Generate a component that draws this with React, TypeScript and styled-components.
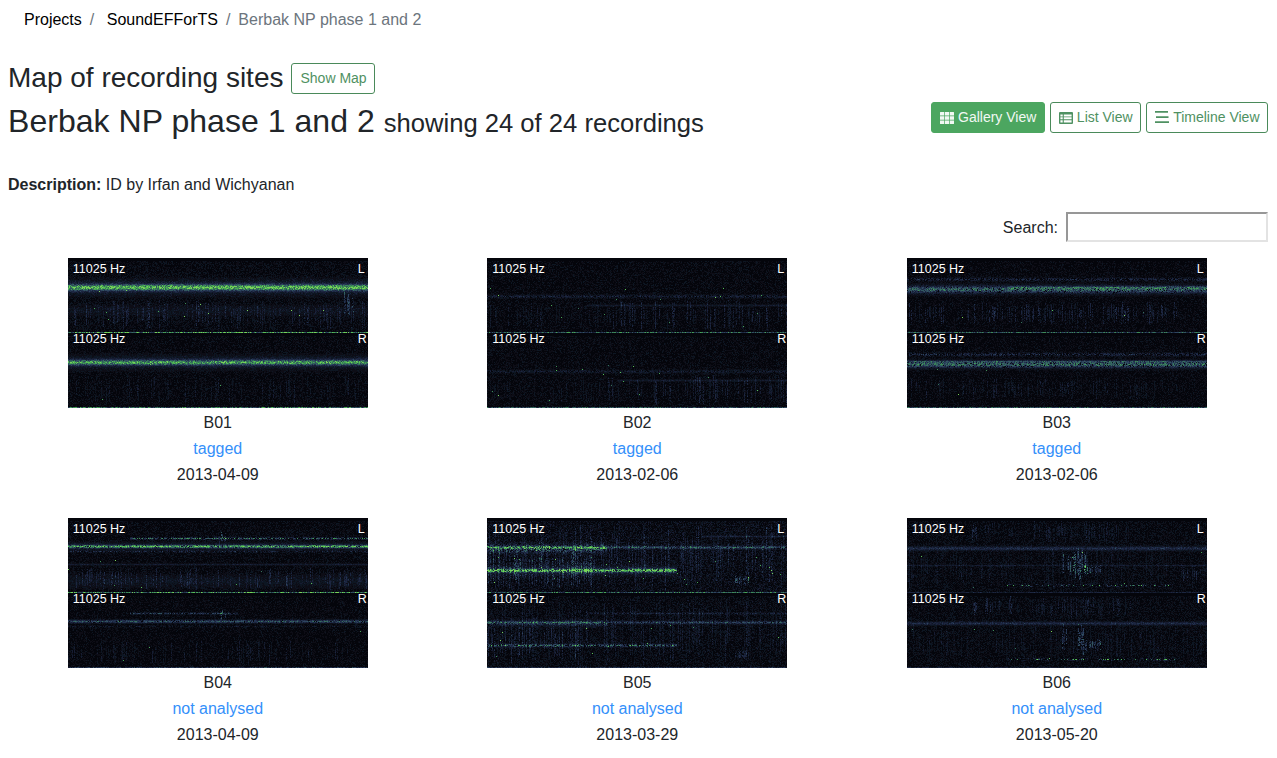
import React, { useMemo } from 'react';
import styled, { createGlobalStyle } from 'styled-components';

const GlobalStyle = createGlobalStyle`
  html, body {
    margin: 0;
    background: #fff;
  }
  body {
    padding: 8px 9px 0 8px;
    font-family: "Liberation Sans", Arial, sans-serif;
    font-size: 16px;
    line-height: 1.5;
    color: #212529;
  }
`;

const Breadcrumb = styled.ol`
  display: flex;
  list-style: none;
  margin: 0 0 31px;
  padding: 0 16px;
`;

const Crumb = styled.li<{ $active?: boolean; $first?: boolean; $gap?: number }>`
  color: ${({ $active }) => ($active ? '#6c757d' : '#000')};
  &::before {
    content: ${({ $first }) => ($first ? 'none' : "'/'")};
    color: #6c757d;
    padding: 0 8px;
  }
  a {
    color: inherit;
    text-decoration: none;
    margin-left: ${({ $gap }) => $gap ?? 0}px;
  }
`;

const MapRow = styled.div`
  display: flex;
  align-items: center;
  height: 31px;
  margin-bottom: 8px;
`;

const MapTitle = styled.h3`
  margin: 0 8px 2px 0;
  font-size: 28px;
  font-weight: 500;
  line-height: 1.2;
`;

const Button = styled.button<{ $active?: boolean }>`
  display: inline-flex;
  align-items: center;
  gap: 4px;
  height: 31px;
  padding: 0 7.5px 0 8px;
  font-family: inherit;
  font-size: 14px;
  line-height: 21px;
  white-space: nowrap;
  border: 1px solid ${({ $active }) => ($active ? '#4ca660' : '#4a8a5a')};
  border-radius: 3px;
  background: ${({ $active }) => ($active ? '#4ca660' : '#fff')};
  color: ${({ $active }) => ($active ? '#f1f8f3' : '#4f9162')};
`;

const HeaderRow = styled.div`
  display: flex;
  justify-content: space-between;
  align-items: flex-start;
  height: 71px;
`;

const Heading = styled.h2`
  margin: 0;
  font-size: 32px;
  font-weight: 500;
  line-height: 38px;
  letter-spacing: 0.04px;
  small {
    font-size: 25.6px;
    font-weight: 400;
    letter-spacing: 0;
  }
`;

const ViewButtons = styled.div`
  display: flex;
  gap: 5px;
`;

const Description = styled.p`
  margin: 0 0 15px;
  b {
    font-weight: 700;
  }
`;

const SearchRow = styled.label`
  display: flex;
  justify-content: flex-end;
  align-items: center;
  gap: 8px;
  margin-bottom: 16px;
`;

const SearchLabel = styled.span`
  margin-top: 2px;
`;

const SearchInput = styled.input`
  box-sizing: border-box;
  width: 202px;
  height: 30px;
  padding: 1px 2px;
  border: 2px solid #e3e3e3;
  border-top-color: #979797;
  border-left-color: #979797;
  background: #fff;
`;

const Gallery = styled.div`
  display: grid;
  grid-template-columns: repeat(3, 419.5px);
`;

const Card = styled.div`
  display: flex;
  flex-direction: column;
  align-items: center;
  height: 260px;
`;

const CardLine = styled.div<{ $link?: boolean }>`
  height: 26px;
  line-height: 26px;
  color: ${({ $link }) => ($link ? '#3490fa' : '#212529')};
`;

const CardTitle = styled(CardLine)`
  margin-top: 2px;
`;

const Thumb = styled.div`
  position: relative;
  width: 300px;
  height: 150px;
  overflow: hidden;
  background: #04050b;
  svg {
    display: block;
  }
`;

const ThumbLabel = styled.span<{ $row: number; $side?: boolean }>`
  position: absolute;
  top: ${({ $row }) => 3 + $row * 70}px;
  left: ${({ $side }) => ($side ? 290 : 5)}px;
  color: #fff;
  font-size: 12.5px;
  line-height: 16px;
`;

const GridIcon = () => (
  <svg width="14" height="14" viewBox="0 0 14 14">
    <path
      fill="currentColor"
      d="M0 1.5a.5.5 0 0 1 .5-.5h3.7v3.5H0zM4.9 1h4.2v3.5H4.9zM9.8 1h3.7a.5.5 0 0 1 .5.5v3H9.8zM0 5.25h4.2v3.5H0zM4.9 5.25h4.2v3.5H4.9zM9.8 5.25H14v3.5H9.8zM0 9.5h4.2V13H.5a.5.5 0 0 1-.5-.5zM4.9 9.5h4.2V13H4.9zM9.8 9.5H14v3a.5.5 0 0 1-.5.5H9.8z"
    />
  </svg>
);

const ListIcon = () => (
  <svg width="14" height="14" viewBox="0 0 14 14">
    <path
      fill="currentColor"
      fillRule="evenodd"
      d="M1 1h12a1 1 0 0 1 1 1v10a1 1 0 0 1-1 1H1a1 1 0 0 1-1-1V2a1 1 0 0 1 1-1zM1.4 3.4v2h2.3v-2zm3.4 0v2h7.8v-2zM1.4 6.3v2h2.3v-2zm3.4 0v2h7.8v-2zM1.4 9.2v2.2h2.3V9.2zm3.4 0v2.2h7.8V9.2z"
    />
  </svg>
);

const BarsIcon = () => (
  <svg width="14" height="14" viewBox="0 0 14 14">
    <path fill="currentColor" d="M0 0h13v1.7H0zM1 5.2h12.5v1.7H1zM0 10.2h14v1.7H0z" />
  </svg>
);

interface Band {
  y: number;
  h: number;
  amp: number;
  from?: number;
  to?: number;
  grain?: number;
}

interface Patch {
  x: number;
  w: number;
  y: number;
  h: number;
  amp: number;
  density: number;
}

interface Channel {
  base: number;
  line: number;
  bands: Band[];
  patches: Patch[];
  dots: number;
}

const BUCKETS = [
  '#080b15', '#0d1220', '#131b30', '#1a2640', '#233350', '#2d445e',
  '#32585e', '#36715b', '#3c8c56', '#46a754', '#58c054', '#7ad258'
];

function makeRandom(seed: number) {
  let s = seed >>> 0;
  return () => {
    s = (s + 0x6d2b79f5) >>> 0;
    let t = Math.imul(s ^ (s >>> 15), 1 | s);
    t = (t + Math.imul(t ^ (t >>> 7), 61 | t)) ^ t;
    return ((t ^ (t >>> 14)) >>> 0) / 4294967296;
  };
}

function renderChannel(ch: Channel, seed: number, top: number, out: string[]) {
  const rnd = makeRandom(seed);
  const field: Float32Array[] = [];
  for (let y = 0; y < 75; y++) field.push(new Float32Array(300));

  ch.patches.forEach(p => {
    for (let x = p.x; x < Math.min(300, p.x + p.w); x++) {
      if (rnd() > p.density) continue;
      const strength = p.amp * (0.4 + rnd() * 0.9);
      const y0 = p.y + Math.floor(rnd() * p.h * 0.4);
      const y1 = p.y + p.h - Math.floor(rnd() * p.h * 0.4);
      for (let y = y0; y < y1 && y < 75; y++) {
        if (rnd() < 0.7) field[y][x] += strength * (0.5 + rnd() * 0.6);
      }
    }
  });

  ch.bands.forEach(b => {
    const from = b.from ?? 0;
    const to = b.to ?? 300;
    const grain = b.grain ?? 0;
    for (let y = Math.max(0, Math.floor(b.y - b.h * 2)); y < Math.min(75, b.y + b.h * 2); y++) {
      const fall = Math.exp(-(((y - b.y) / b.h) ** 2));
      for (let x = from; x < to; x++) {
        if (grain && rnd() < grain) continue;
        field[y][x] += b.amp * fall * (0.5 + rnd() * 0.75);
      }
    }
  });

  for (let i = 0; i < ch.dots; i++) {
    const x = Math.floor(rnd() * 300);
    const y = 30 + Math.floor(rnd() * 40);
    field[y][x] += 0.6 + rnd() * 0.3;
  }

  for (let y = 0; y < 75; y++) {
    for (let x = 0; x < 300; x++) {
      const r = rnd();
      let v = field[y][x] + r * r * r * ch.base + rnd() * ch.base * 0.15;
      if (y < 3) v *= 0.1;
      if (y === 74) v = ch.line * (0.35 + rnd() * 0.9);
      if (v < 0.03) continue;
      const bucket = Math.min(BUCKETS.length - 1, Math.floor(v * BUCKETS.length));
      out[bucket] += `M${x} ${y + top}h1v1h-1z`;
    }
  }
}

const Spectrogram = ({ left, right, seed }: { left: Channel; right: Channel; seed: number }) => {
  const paths = useMemo(() => {
    const out = BUCKETS.map(() => '');
    renderChannel(left, seed, 0, out);
    renderChannel(right, seed + 97, 75, out);
    return out;
  }, [left, right, seed]);

  return (
    <Thumb>
      <svg width="300" height="150" viewBox="0 0 300 150">
        <filter id={`soft${seed}`} x="0" y="0" width="100%" height="100%">
          <feGaussianBlur stdDeviation="0.5" />
        </filter>
        <g filter={`url(#soft${seed})`} shapeRendering="crispEdges">
          {paths.map((d, i) => (
            <path key={i} d={d} fill={BUCKETS[i]} />
          ))}
        </g>
      </svg>
      <ThumbLabel $row={0}>11025 Hz</ThumbLabel>
      <ThumbLabel $row={0} $side>L</ThumbLabel>
      <ThumbLabel $row={1}>11025 Hz</ThumbLabel>
      <ThumbLabel $row={1} $side>R</ThumbLabel>
    </Thumb>
  );
};

const lowStreaks = (amp: number, density = 0.3): Patch[] => [
  { x: 0, w: 300, y: 42, h: 30, amp, density }
];

const recordings: {
  name: string;
  status: string;
  date: string;
  seed: number;
  left: Channel;
  right: Channel;
}[] = [
  {
    name: 'B01',
    status: 'tagged',
    date: '2013-04-09',
    seed: 11,
    left: {
      base: 0.14, line: 0.85, dots: 14,
      bands: [
        { y: 29, h: 3, amp: 0.72 },
        { y: 29, h: 6.5, amp: 0.22 },
        { y: 52, h: 5, amp: 0.07 }
      ],
      patches: [...lowStreaks(0.2), { x: 276, w: 12, y: 34, h: 28, amp: 0.38, density: 0.5 }]
    },
    right: {
      base: 0.11, line: 0.7, dots: 3,
      bands: [
        { y: 29, h: 2.6, amp: 0.62 },
        { y: 29, h: 6, amp: 0.2 }
      ],
      patches: lowStreaks(0.13, 0.2)
    }
  },
  {
    name: 'B02',
    status: 'tagged',
    date: '2013-02-06',
    seed: 23,
    left: {
      base: 0.11, line: 0.65, dots: 16,
      bands: [
        { y: 38, h: 1.5, amp: 0.22, grain: 0.3 },
        { y: 47, h: 1, amp: 0.14, from: 100 }
      ],
      patches: [
        { x: 120, w: 180, y: 42, h: 30, amp: 0.22, density: 0.35 },
        { x: 0, w: 120, y: 45, h: 25, amp: 0.14, density: 0.25 }
      ]
    },
    right: {
      base: 0.11, line: 0.55, dots: 16,
      bands: [
        { y: 38, h: 1.5, amp: 0.18, grain: 0.3 },
        { y: 47, h: 1, amp: 0.14, from: 130 }
      ],
      patches: [
        { x: 120, w: 180, y: 42, h: 30, amp: 0.2, density: 0.3 },
        { x: 0, w: 120, y: 45, h: 25, amp: 0.1, density: 0.2 }
      ]
    }
  },
  {
    name: 'B03',
    status: 'tagged',
    date: '2013-02-06',
    seed: 37,
    left: {
      base: 0.1, line: 0.6, dots: 5,
      bands: [
        { y: 31, h: 3.6, amp: 0.55, grain: 0.1 },
        { y: 29, h: 1.2, amp: 0.24, from: 100 },
        { y: 21, h: 1.6, amp: 0.28, grain: 0.45 }
      ],
      patches: [
        { x: 0, w: 270, y: 44, h: 22, amp: 0.24, density: 0.4 },
        { x: 155, w: 25, y: 50, h: 24, amp: 0.25, density: 0.4 }
      ]
    },
    right: {
      base: 0.1, line: 0.55, dots: 4,
      bands: [
        { y: 31, h: 3.2, amp: 0.58, grain: 0.1 },
        { y: 28, h: 1, amp: 0.3 },
        { y: 21, h: 1.6, amp: 0.3, grain: 0.45 }
      ],
      patches: [{ x: 0, w: 270, y: 44, h: 22, amp: 0.15, density: 0.3 }]
    }
  },
  {
    name: 'B04',
    status: 'not analysed',
    date: '2013-04-09',
    seed: 41,
    left: {
      base: 0.12, line: 0.8, dots: 8,
      bands: [
        { y: 28, h: 1.5, amp: 0.72, grain: 0.1 },
        { y: 28, h: 3.5, amp: 0.16 },
        { y: 20, h: 1, amp: 0.6, from: 62, grain: 0.35 },
        { y: 33, h: 1, amp: 0.28, grain: 0.6 },
        { y: 46, h: 0.8, amp: 0.16 },
        { y: 63, h: 6, amp: 0.08 }
      ],
      patches: [
        { x: 0, w: 300, y: 50, h: 22, amp: 0.22, density: 0.3 },
        { x: 150, w: 8, y: 14, h: 14, amp: 0.42, density: 0.7 }
      ]
    },
    right: {
      base: 0.1, line: 0.42, dots: 3,
      bands: [
        { y: 28, h: 1.5, amp: 0.5, grain: 0.1 },
        { y: 20, h: 0.9, amp: 0.38, from: 62, to: 170, grain: 0.3 },
        { y: 33, h: 1, amp: 0.16, grain: 0.6 }
      ],
      patches: [
        { x: 0, w: 300, y: 48, h: 24, amp: 0.15, density: 0.2 },
        { x: 150, w: 8, y: 14, h: 14, amp: 0.35, density: 0.7 }
      ]
    }
  },
  {
    name: 'B05',
    status: 'not analysed',
    date: '2013-03-29',
    seed: 59,
    left: {
      base: 0.2, line: 0.65, dots: 26,
      bands: [
        { y: 29, h: 1.4, amp: 0.45, grain: 0.1 },
        { y: 30, h: 4, amp: 0.46, to: 120, grain: 0.3 },
        { y: 52, h: 1.6, amp: 0.76, to: 190, grain: 0.25 },
        { y: 52, h: 4, amp: 0.2, to: 190 },
        { y: 18, h: 0.8, amp: 0.22, from: 215 }
      ],
      patches: [
        { x: 0, w: 300, y: 6, h: 66, amp: 0.22, density: 0.35 },
        { x: 248, w: 14, y: 58, h: 10, amp: 0.46, density: 0.8 },
        { x: 0, w: 110, y: 32, h: 38, amp: 0.32, density: 0.45 }
      ]
    },
    right: {
      base: 0.16, line: 0.35, dots: 12,
      bands: [
        { y: 29, h: 1.3, amp: 0.38, grain: 0.1 },
        { y: 30, h: 3, amp: 0.26, to: 120, grain: 0.25 },
        { y: 52, h: 1.3, amp: 0.55, to: 190, grain: 0.3 },
        { y: 20, h: 0.9, amp: 0.22, from: 100, grain: 0.3 }
      ],
      patches: [
        { x: 0, w: 300, y: 4, h: 68, amp: 0.14, density: 0.3 },
        { x: 248, w: 14, y: 58, h: 8, amp: 0.3, density: 0.8 },
        { x: 0, w: 100, y: 32, h: 38, amp: 0.22, density: 0.4 }
      ]
    }
  },
  {
    name: 'B06',
    status: 'not analysed',
    date: '2013-05-20',
    seed: 73,
    left: {
      base: 0.14, line: 0.28, dots: 6,
      bands: [
        { y: 30, h: 1.8, amp: 0.3 },
        { y: 47, h: 0.7, amp: 0.14 },
        { y: 67, h: 0.9, amp: 0.7, from: 100, to: 270, grain: 0.75 }
      ],
      patches: [
        { x: 65, w: 5, y: 3, h: 20, amp: 0.28, density: 0.9 },
        { x: 78, w: 16, y: 3, h: 18, amp: 0.18, density: 0.5 },
        { x: 100, w: 6, y: 3, h: 20, amp: 0.22, density: 0.6 },
        { x: 125, w: 100, y: 3, h: 22, amp: 0.16, density: 0.4 },
        { x: 155, w: 24, y: 30, h: 32, amp: 0.42, density: 0.6 },
        { x: 177, w: 18, y: 46, h: 12, amp: 0.44, density: 0.8 },
        { x: 0, w: 300, y: 30, h: 40, amp: 0.11, density: 0.3 },
        { x: 270, w: 25, y: 48, h: 16, amp: 0.24, density: 0.4 }
      ]
    },
    right: {
      base: 0.14, line: 0.25, dots: 6,
      bands: [
        { y: 30, h: 1.6, amp: 0.28 },
        { y: 66, h: 0.9, amp: 0.7, from: 100, to: 270, grain: 0.75 }
      ],
      patches: [
        { x: 65, w: 5, y: 3, h: 20, amp: 0.34, density: 0.9 },
        { x: 78, w: 16, y: 3, h: 18, amp: 0.2, density: 0.5 },
        { x: 100, w: 6, y: 3, h: 20, amp: 0.26, density: 0.7 },
        { x: 125, w: 100, y: 3, h: 22, amp: 0.16, density: 0.4 },
        { x: 155, w: 24, y: 30, h: 32, amp: 0.38, density: 0.6 },
        { x: 177, w: 18, y: 46, h: 12, amp: 0.4, density: 0.8 },
        { x: 0, w: 300, y: 30, h: 40, amp: 0.11, density: 0.3 }
      ]
    }
  }
];

export default function App() {
  return (
    <>
      <GlobalStyle />
      <Breadcrumb>
        <Crumb $first><a href="#projects">Projects</a></Crumb>
        <Crumb $gap={4.5}><a href="#project">SoundEFForTS</a></Crumb>
        <Crumb $active>Berbak NP phase 1 and 2</Crumb>
      </Breadcrumb>

      <MapRow>
        <MapTitle>Map of recording sites</MapTitle>
        <Button>Show Map</Button>
      </MapRow>

      <HeaderRow>
        <Heading>
          Berbak NP phase 1 and 2 <small>showing 24 of 24 recordings</small>
        </Heading>
        <ViewButtons>
          <Button $active><GridIcon />Gallery View</Button>
          <Button><ListIcon />List View</Button>
          <Button><BarsIcon />Timeline View</Button>
        </ViewButtons>
      </HeaderRow>

      <Description><b>Description:</b> ID by Irfan and Wichyanan</Description>

      <SearchRow>
        <SearchLabel>Search:</SearchLabel>
        <SearchInput type="search" />
      </SearchRow>

      <Gallery>
        {recordings.map(r => (
          <Card key={r.name}>
            <Spectrogram left={r.left} right={r.right} seed={r.seed} />
            <CardTitle>{r.name}</CardTitle>
            <CardLine $link>{r.status}</CardLine>
            <CardLine>{r.date}</CardLine>
          </Card>
        ))}
      </Gallery>
    </>
  );
}
